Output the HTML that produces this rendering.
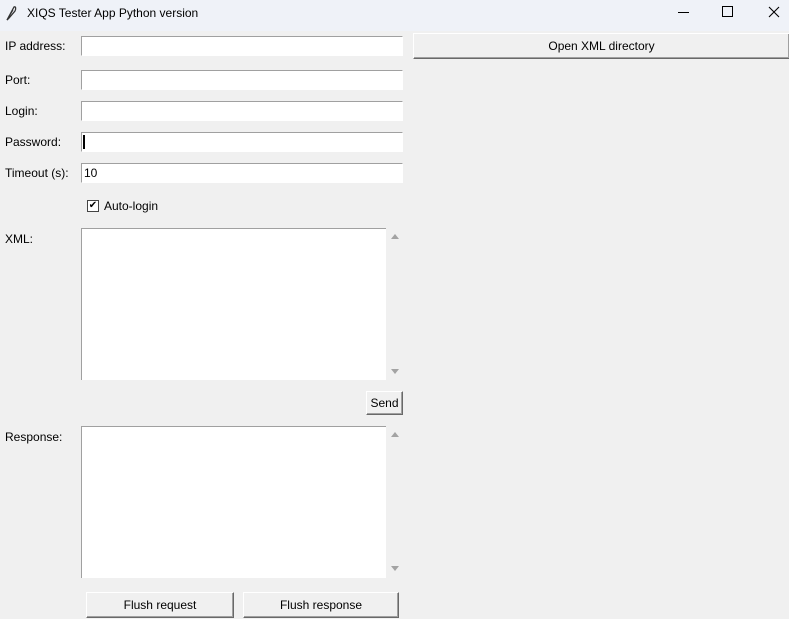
<!DOCTYPE html>
<html><head><style>
body{margin:0;width:789px;height:619px;background:#f0f0f0;font-family:"Liberation Sans",sans-serif;font-size:12px;color:#000;position:relative;overflow:hidden}
.a{position:absolute}
.tb{left:0;top:0;width:789px;height:31px;background:#eff2f8}
.e{position:absolute;left:81px;width:320px;height:18px;background:#fff;border-top:1px solid #a0a0a0;border-left:1px solid #a0a0a0;border-right:1px solid #fff;border-bottom:1px solid #fff}
.l{position:absolute;left:5px}
.t{position:absolute;left:81px;width:304px;background:#fff;border-top:1px solid #a0a0a0;border-left:1px solid #a0a0a0}
.b{position:absolute;background:#f0f0f0;border:1px solid #fff;border-right-color:#696969;border-bottom-color:#696969;box-shadow:inset -1px -1px 0 #a0a0a0;text-align:center;box-sizing:border-box}
.up,.dn{position:absolute;width:0;height:0;border-left:4px solid transparent;border-right:4px solid transparent}
.up{border-bottom:5px solid #a3a3a3}.dn{border-top:5px solid #a3a3a3}
</style></head><body>
<div class="a tb"></div>
<svg class="a" style="left:5px;top:5px" width="12" height="16" viewBox="0 0 12 16"><path d="M2 15 L9 2 C11 1 11 4 10 6 L4 13 Z" fill="none" stroke="#333" stroke-width="1.3"/><path d="M2 15 L8 5" stroke="#333" stroke-width="1"/></svg>
<div class="a" style="left:27px;top:6px;font-size:12px">XIQS Tester App Python version</div>
<div class="a" style="left:678px;top:12px;width:11px;height:1px;background:#000"></div>
<div class="a" style="left:722px;top:6px;width:9px;height:9px;border:1px solid #000"></div>
<svg class="a" style="left:768px;top:6px" width="12" height="12" viewBox="0 0 12 12"><path d="M1 1 L11 11 M11 1 L1 11" stroke="#000" stroke-width="1.1"/></svg>

<div class="l" style="top:39px">IP address:</div><div class="e" style="top:36px"></div>
<div class="l" style="top:73px">Port:</div><div class="e" style="top:70px"></div>
<div class="l" style="top:104px">Login:</div><div class="e" style="top:101px"></div>
<div class="l" style="top:135px">Password:</div><div class="e" style="top:132px"><div class="a" style="left:1px;top:2px;width:2px;height:14px;background:#000"></div></div>
<div class="l" style="top:166px">Timeout (s):</div><div class="e" style="top:163px"><span class="a" style="left:2px;top:2px">10</span></div>
<div class="a" style="left:87px;top:200px;width:10px;height:10px;background:#fff;border:1px solid #444;font-size:10px;line-height:10px;text-align:center">&#x2714;</div>
<div class="a" style="left:104px;top:199px">Auto-login</div>

<div class="l" style="top:232px">XML:</div>
<div class="t" style="top:228px;height:151px"></div>
<div class="up" style="left:391px;top:234px"></div><div class="dn" style="left:391px;top:369px"></div>
<div class="b" style="left:366px;top:391px;width:37px;height:24px;line-height:22px">Send</div>
<div class="l" style="top:430px">Response:</div>
<div class="t" style="top:426px;height:151px"></div>
<div class="up" style="left:391px;top:432px"></div><div class="dn" style="left:391px;top:566px"></div>
<div class="b" style="left:86px;top:592px;width:148px;height:26px;line-height:24px">Flush request</div>
<div class="b" style="left:243px;top:592px;width:156px;height:26px;line-height:24px">Flush response</div>
<div class="b" style="left:413px;top:33px;width:377px;height:26px;line-height:24px">Open XML directory</div>
</body></html>
